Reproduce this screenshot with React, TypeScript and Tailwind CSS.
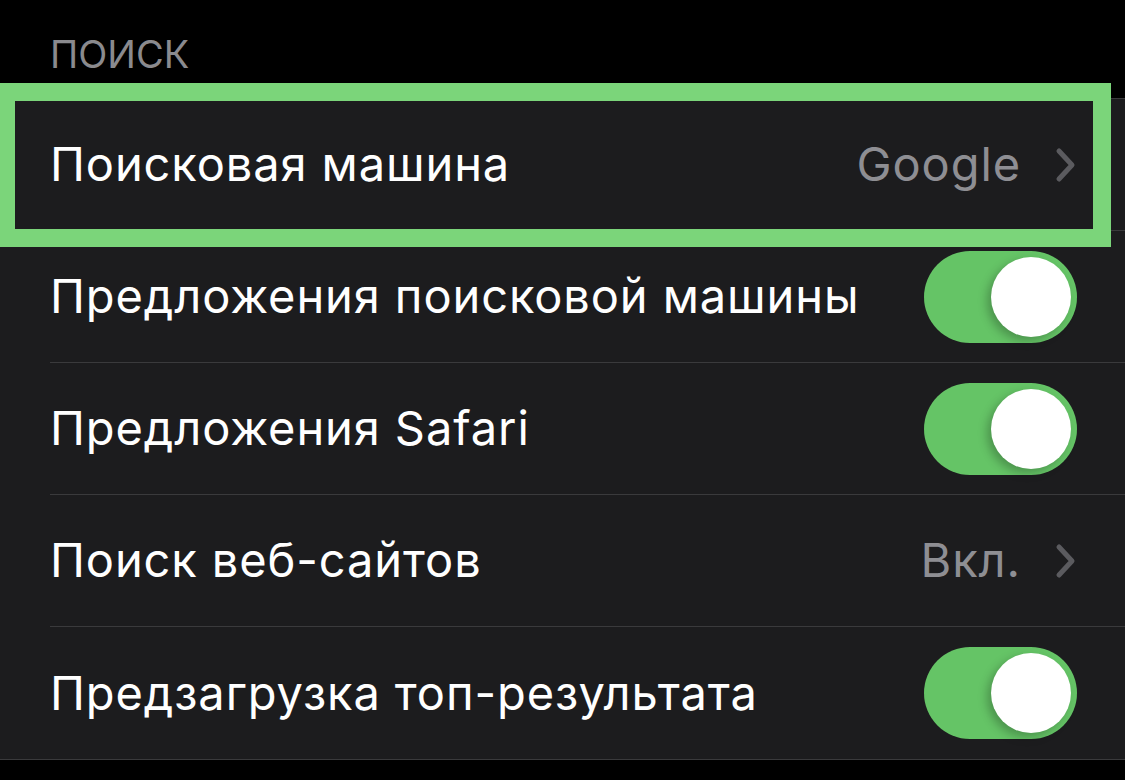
import React from 'react';

const Chevron = () => (
  <svg width="22" height="36" viewBox="0 0 22 36" className="ml-[34px]">
    <path d="M4 4 L17 18 L4 32" fill="none" stroke="#5b5b5f" strokeWidth="5" strokeLinecap="round" strokeLinejoin="round" />
  </svg>
);

const Toggle = () => (
  <div className="relative w-[153px] h-[92px] rounded-full bg-[#65c466]">
    <div className="absolute right-[6px] top-[6px] w-[80px] h-[80px] rounded-full bg-white shadow-[-4px_4px_10px_rgba(0,0,0,0.25)]" />
  </div>
);

interface RowProps {
  label: string;
  value?: string;
  toggle?: boolean;
  last?: boolean;
  highlighted?: boolean;
}

const Row: React.FC<RowProps> = ({ label, value, toggle, last, highlighted }) => (
  <div className="relative pl-[50px]">
    <div className={`flex items-center h-[132px] pr-[48px] ${last ? '' : 'border-b border-[#3a3a3c]'}`}>
      <span className="flex-1 text-white text-[47px] tracking-[0.9px]">{label}</span>
      {value && (
        <div className="flex items-center">
          <span className="text-[#8e8e93] text-[47px] tracking-[0.9px]">{value}</span>
          <Chevron />
        </div>
      )}
      {toggle && <Toggle />}
    </div>
    {highlighted && (
      <div className="absolute left-0 top-[-16px] w-[1111px] h-[164px] border-[18px] border-l-[15px] border-[#7bd57a] pointer-events-none" />
    )}
  </div>
);

export default function App() {
  return (
    <div className="w-[1125px] h-[780px] bg-black overflow-hidden" style={{ fontFamily: 'Inter, "Noto Sans", sans-serif' }}>
      <div className="h-[98px] pl-[50px] pt-[35px]">
        <span className="text-[#8a8a8e] text-[38px] leading-none">ПОИСК</span>
      </div>
      <div className="bg-[#1c1c1e] border-y border-[#3a3a3c]">
        <Row label="Поисковая машина" value="Google" highlighted />
        <Row label="Предложения поисковой машины" toggle />
        <Row label="Предложения Safari" toggle />
        <Row label="Поиск веб-сайтов" value="Вкл." />
        <Row label="Предзагрузка топ-результата" toggle last />
      </div>
    </div>
  );
}
